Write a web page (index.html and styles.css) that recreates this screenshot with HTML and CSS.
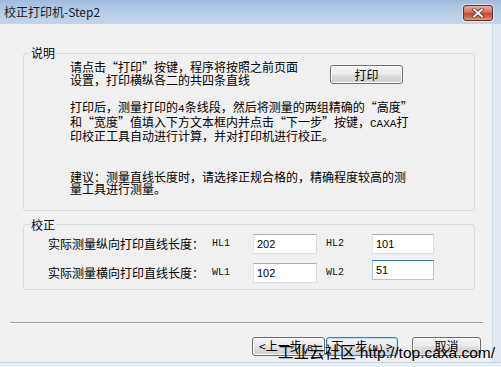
FILE: index.html
```html
<!DOCTYPE html>
<html lang="zh-CN">
<head>
<meta charset="utf-8">
<title>校正打印机-Step2</title>
<link rel="stylesheet" href="styles.css">
</head>
<body>
<div class="window">
  <div class="titlebar">
    <span class="title">校正打印机-Step2</span>
    <button class="close" aria-label="关闭">
      <svg width="14" height="10" viewBox="0 0 14 10">
        <path d="M3 1.5 L11 8.5 M11 1.5 L3 8.5" stroke="#5b2a22" stroke-width="3.6" stroke-linecap="square" fill="none"/>
        <path d="M3 1.5 L11 8.5 M11 1.5 L3 8.5" stroke="#ffffff" stroke-width="2" stroke-linecap="square" fill="none"/>
      </svg>
    </button>
  </div>
  <div class="frame">
    <div class="client">
      <fieldset class="group group-info">
        <legend>说明</legend>
        <div class="info-body">
          <div class="info-top">
            <p class="text text-intro">请点击“打印”按键，程序将按照之前页面<br>设置，打印横纵各二的共四条直线</p>
            <button class="btn btn-print">打印</button>
          </div>
          <p class="text text-steps">打印后，测量打印的<span class="asc">4</span>条线段，然后将测量的两组精确的“高度”<br>和“宽度”值填入下方文本框内并点击“下一步”按键，<span class="asc">CAXA</span>打<br>印校正工具自动进行计算，并对打印机进行校正。</p>
          <p class="text text-tip">建议：测量直线长度时，请选择正规合格的，精确程度较高的测<br>量工具进行测量。</p>
        </div>
      </fieldset>
      <fieldset class="group group-calib">
        <legend>校正</legend>
        <div class="grid">
          <span class="lbl">实际测量纵向打印直线长度：</span>
          <span class="tag">HL1</span>
          <input class="field" value="202">
          <span class="tag">HL2</span>
          <input class="field field-wide" value="101">
          <span class="lbl">实际测量横向打印直线长度：</span>
          <span class="tag">WL1</span>
          <input class="field" value="102">
          <span class="tag">WL2</span>
          <input class="field field-wide field-focus" value="51">
        </div>
      </fieldset>
      <div class="sep"></div>
      <div class="buttons">
        <button class="btn btn-nav">&lt;上一步<span class="acc">(B)</span></button>
        <button class="btn btn-nav btn-default">下一步<span class="acc">(N)</span> &gt;</button>
        <button class="btn btn-cancel">取消</button>
      </div>
    </div>
    <div class="side"></div>
  </div>
  <div class="bottom"></div>
  <div class="watermark">工业云社区 http://top.caxa.com/</div>
</div>
</body>
</html>
```

FILE: styles.css
```css
* { box-sizing: border-box; }

body {
  margin: 0;
  background: #ffffff;
  font-family: "Noto Sans CJK SC", sans-serif;
  font-size: 12px;
  color: #000000;
}

.window {
  position: relative;
  width: 501px;
  height: 367px;
  overflow: hidden;
  display: flex;
  flex-direction: column;
  background: #e6edf6;
}

.titlebar {
  flex: none;
  height: 24px;
  display: flex;
  align-items: flex-start;
  background: linear-gradient(to bottom, #9fb9da 0, #abc4e2 5px, #b9cee8 14px, #c2d5ea 24px);
}

.title {
  margin: 3px 0 0 4px;
  line-height: 18px;
  font-size: 12px;
  color: #1b1b1b;
}

.close {
  margin: 5px 8px 0 auto;
  width: 30px;
  height: 16px;
  padding: 0;
  border: 1px solid #6a3028;
  border-radius: 3px;
  background: linear-gradient(to bottom, #e9ab9a 0%, #d97a63 40%, #c54a31 55%, #cf6a50 80%, #e09a80 100%);
  box-shadow: 0 0 0 1px rgba(255, 255, 255, 0.45);
  display: flex;
  align-items: center;
  justify-content: center;
}

.frame {
  flex: none;
  height: 338px;
  display: flex;
}

.client {
  width: 493px;
  background: #f0f0f0;
  border-right: 1px solid #d3dbe5;
  display: flex;
  flex-direction: column;
}

.side {
  flex: 1;
  background: #e1e9f3;
}

.bottom {
  flex: 1;
  border-top: 1px solid #c6d4e7;
  background: #e8eff8;
}

.group {
  margin: 0 0 0 23px;
  width: 452px;
  min-width: 0;
  padding: 0;
  border: 1px solid #d5dadf;
  border-radius: 3px;
}

.group legend {
  margin-left: 6px;
  padding: 0 1px;
  line-height: 14px;
  font-size: 12px;
}

.group-info {
  margin-top: 22px;
}

.info-body {
  padding: 0 0 14px 46px;
}

.text {
  margin: 0;
  line-height: 12.5px;
  white-space: nowrap;
}

.asc {
  font-family: "Liberation Mono", monospace;
  font-size: 11px;
}

.info-top {
  display: flex;
  align-items: flex-start;
}

.text-intro {
  width: 260px;
  margin-top: 1px;
}

.text-steps {
  margin-top: 15px;
}

.text-tip {
  margin-top: 28px;
}

.btn {
  height: 19px;
  padding: 0;
  border: 1px solid #707070;
  border-radius: 3px;
  background: linear-gradient(to bottom, #f3f3f3 0%, #ececec 48%, #dedede 52%, #d0d0d0 100%);
  box-shadow: inset 0 0 0 1px #fbfbfb;
  font-family: "Noto Sans CJK SC", sans-serif;
  font-size: 12px;
  line-height: 16px;
  color: #000000;
  white-space: nowrap;
}

.btn-print {
  margin-top: 5px;
  width: 73px;
}

.group-calib {
  margin-top: 7px;
}

.grid {
  padding: 2px 0 6px 24px;
  display: grid;
  grid-template-columns: 164px 41px 73px 46px 62px;
  grid-auto-rows: 20px;
  row-gap: 9px;
  align-items: center;
}

.lbl {
  line-height: 14px;
  white-space: nowrap;
}

.tag {
  font-family: "Liberation Mono", monospace;
  font-size: 10px;
  line-height: 12px;
  color: #111111;
}

.field {
  width: 64px;
  height: 20px;
  padding: 0 3px;
  border: 1px solid #d9dde3;
  border-top-color: #abadb3;
  border-left-color: #e2e3ea;
  background: #ffffff;
  font-family: "Liberation Sans", sans-serif;
  font-size: 11px;
  color: #000000;
  outline: none;
}

.field-wide {
  width: 62px;
}

.field-focus {
  margin-top: -5px;
  border-color: #a6c8e3;
  border-top-color: #3d7bad;
}

.sep {
  margin: 32px 0 0 10px;
  width: 473px;
  height: 2px;
  border-top: 1px solid #a0a0a0;
  border-bottom: 1px solid #ffffff;
}

.buttons {
  margin-top: 13px;
  padding-right: 11px;
  display: flex;
  justify-content: flex-end;
}

.btn-nav {
  width: 73px;
}

.btn-default {
  width: 72px;
  margin-left: 1px;
  border-color: #3c7fb1;
  box-shadow: inset 0 0 0 1px #b6e0f7;
}

.btn-cancel {
  width: 69px;
  margin-left: 14px;
}

.acc {
  font-family: "Liberation Mono", monospace;
  font-size: 9px;
}

.watermark {
  position: absolute;
  left: 278px;
  top: 344px;
  font-family: "Liberation Sans", "Noto Sans CJK SC", sans-serif;
  font-size: 15.5px;
  line-height: 18px;
  color: #000000;
  white-space: nowrap;
}
```
